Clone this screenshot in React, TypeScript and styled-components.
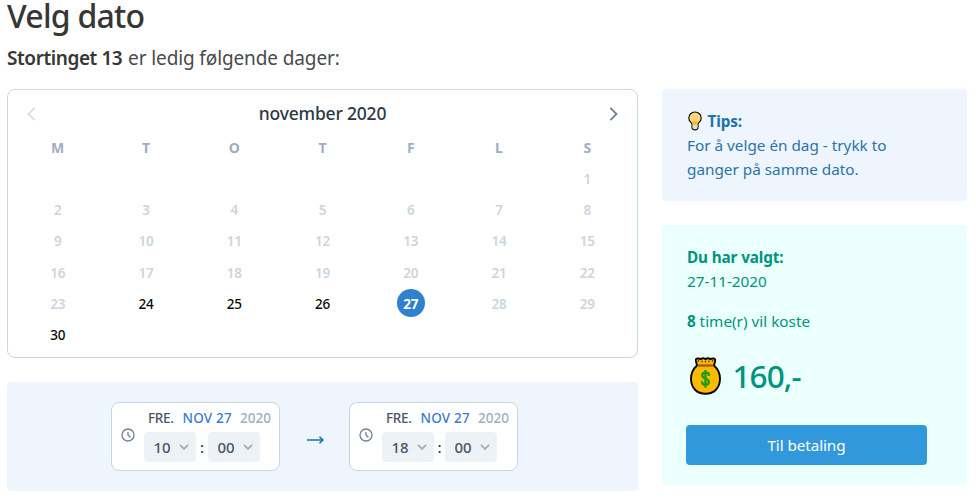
import React from 'react';
import styled, { createGlobalStyle } from 'styled-components';

const GlobalStyle = createGlobalStyle`
  *, *::before, *::after { box-sizing: border-box; }
  body {
    margin: 0;
    background: #fff;
    color: #363636;
    font-family: 'Segoe UI', 'Noto Sans', sans-serif;
  }
  h1, p { margin: 0; }
  button { font-family: inherit; border: 0; background: none; padding: 0; }
  svg { display: block; flex: none; }
`;

const Page = styled.main`
  width: 976px;
  height: 502px;
  padding: 0 9px 0 7px;
`;

const Title = styled.h1`
  height: 33px;
  line-height: 32px;
  font-size: 32px;
  font-weight: 500;
  letter-spacing: -0.75px;
`;

const Subtitle = styled.p`
  margin-top: 12px;
  height: 26px;
  line-height: 26px;
  font-size: 19px;
  font-weight: 400;
  letter-spacing: -0.12px;
  color: #4a4a4a;
  white-space: nowrap;
`;

const RoomName = styled.strong`
  color: #363636;
  font-weight: 600;
  letter-spacing: -0.42px;
  margin-right: 1px;
`;

const Columns = styled.div`
  display: grid;
  grid-template-columns: 631px 305px;
  column-gap: 24px;
  align-items: start;
  margin-top: 18px;
`;

const Stack = styled.div`
  display: flex;
  flex-direction: column;
  gap: 24px;
`;

const Calendar = styled.section`
  height: 269px;
  border: 1px solid #cbd5e0;
  border-radius: 8px;
  padding: 10px 5.6px 0;
`;

const CalendarHeader = styled.header`
  display: flex;
  align-items: center;
  justify-content: space-between;
  height: 28px;
  padding: 0 7.4px;
`;

const MonthTitle = styled.div`
  margin-top: -2px;
  font-size: 17.5px;
  font-weight: 500;
  letter-spacing: -0.2px;
  color: #2d3748;
`;

const NavButton = styled.button<{ $disabled?: boolean }>`
  display: flex;
  color: #718096;
  opacity: ${p => (p.$disabled ? 0.25 : 1)};
`;

const Weeks = styled.div`
  display: grid;
  grid-template-columns: repeat(7, 1fr);
  grid-template-rows: 33px;
  grid-auto-rows: 31.2px;
  padding-top: 4px;
`;

const Weekday = styled.div`
  text-align: center;
  font-size: 14px;
  font-weight: 700;
  line-height: 32px;
  color: #a0aec0;
`;

const DayCell = styled.div`
  display: flex;
  justify-content: center;
  align-items: flex-start;
`;

const Day = styled.span<{ $state: 'off' | 'on' | 'selected' }>`
  width: 28px;
  height: 28px;
  margin-top: ${p => (p.$state === 'selected' ? '-0.8px' : '0')};
  border-radius: 50%;
  text-align: center;
  font-size: 13.5px;
  line-height: ${p => (p.$state === 'selected' ? '30.6px' : '29px')};
  letter-spacing: -0.2px;
  font-weight: ${p => (p.$state === 'selected' ? 700 : p.$state === 'off' ? 600 : 500)};
  color: ${p => (p.$state === 'selected' ? '#fff' : p.$state === 'off' ? '#cbd5e0' : '#0a0a0a')};
  background: ${p => (p.$state === 'selected' ? '#3182ce' : 'transparent')};
`;

const TimePanel = styled.section`
  display: flex;
  align-items: flex-start;
  height: 109px;
  padding: 20px 0 0 104px;
  border-radius: 4px;
  background: #eef5fc;
`;

const TimeCard = styled.div`
  display: flex;
  width: 169px;
  height: 69px;
  padding-left: 8px;
  border: 1px solid #cbd5e0;
  border-radius: 8px;
  background: #fff;
`;

const ClockSlot = styled.div`
  width: 24px;
  padding-top: 24px;
  color: #718096;
`;

const DateLine = styled.div`
  display: flex;
  height: 29px;
  padding-left: 4px;
  line-height: 31px;
  font-size: 13.5px;
  font-weight: 500;
  white-space: nowrap;
`;

const WeekdayName = styled.span`
  width: 34.5px;
  letter-spacing: -0.3px;
  color: #4a5568;
`;

const MonthDay = styled.span`
  width: 57.5px;
  letter-spacing: 0.2px;
  color: #3a7bd0;
`;

const Year = styled.span`
  color: #a0aec0;
`;

const TimeLine = styled.div`
  display: flex;
  align-items: center;
`;

const TimeSelect = styled.div`
  display: flex;
  align-items: center;
  justify-content: space-between;
  width: 52px;
  height: 30px;
  padding: 0 7px 0 9.5px;
  border-radius: 4px;
  background: #edf2f7;
  color: #4a5568;
  font-size: 15px;
  font-weight: 500;
  letter-spacing: -0.2px;

  svg { color: #a0aec0; }
`;

const Colon = styled.span<{ $width: number }>`
  width: ${p => p.$width}px;
  text-align: center;
  font-size: 15px;
  font-weight: 500;
  color: #333;
`;

const ArrowSlot = styled.div`
  display: flex;
  justify-content: center;
  width: 69px;
  padding: 33px 0 0 1px;
  color: #1d72aa;
`;

const Message = styled.section<{ $tone: 'info' | 'success' }>`
  height: ${p => (p.$tone === 'info' ? 112 : 260)}px;
  padding: 20px 24px;
  border-radius: 4px;
  font-size: 15.3px;
  line-height: 24px;
  color: ${p => (p.$tone === 'info' ? '#2b73ac' : '#00947e')};
  background: ${p => (p.$tone === 'info' ? '#eef5fc' : '#ebfffc')};

  strong { font-weight: 700; letter-spacing: -0.12px; }
`;

const TipsHeading = styled.div`
  display: flex;
  height: 24px;
  margin-left: 2px;
  gap: 5.5px;
  color: #1d72aa;

  svg { margin-top: 2px; }
`;

const Line = styled.p`
  font-weight: 400;
  padding-left: 1px;
  white-space: nowrap;
`;

const HoursLine = styled(Line)`
  margin-top: 16px;
`;

const Price = styled.div`
  display: flex;
  align-items: center;
  gap: 11.5px;
  height: 40px;
  margin: 23px 0 0 4px;
  font-size: 31.5px;
  font-weight: 500;
  letter-spacing: -0.9px;
`;

const PayButton = styled.button`
  display: block;
  width: 241px;
  height: 40px;
  margin-top: 29px;
  border-radius: 4px;
  background: #3298dc;
  color: #fff;
  font-size: 15.3px;
  letter-spacing: -0.1px;
`;

const Chevron = ({ dir }: { dir: 'left' | 'right' }) => (
  <svg width="20" height="20" viewBox="0 0 20 20" fill="none" stroke="currentColor" strokeWidth="1.8">
    <path d={dir === 'left' ? 'M13.7 3.9L7.4 10l6.3 6.2' : 'M6.3 3.9l6.3 6.1l-6.3 6.2'} />
  </svg>
);

const ClockIcon = () => (
  <svg width="16" height="16" viewBox="0 0 24 24" fill="none" stroke="currentColor" strokeWidth="2" strokeLinecap="round" strokeLinejoin="round">
    <path d="M12 8v4l3 3m6-3a9 9 0 11-18 0 9 9 0 0118 0z" />
  </svg>
);

const CaretIcon = () => (
  <svg width="10" height="8" viewBox="0 0 10 8" fill="none" stroke="currentColor" strokeWidth="1.8">
    <path d="M.9 1.9L5 5.9l4.1-4" />
  </svg>
);

const ArrowIcon = () => (
  <svg width="17" height="10" viewBox="0 0 17 10" fill="none" stroke="currentColor" strokeWidth="1.6">
    <path d="M0 5h16M12.5 1.7L15.9 5l-3.4 3.3" />
  </svg>
);

const BulbIcon = () => (
  <svg width="14" height="20" viewBox="0 0 14 20">
    <path
      d="M7 1C3.500 1 .8 3.700.8 7c0 2.100 1 3.800 2.400 4.900.6.500.8 1 .8 1.700v3c0 1.400 1.100 2.200 3 2.200s3-.8 3-2.200v-3c0-.7.200-1.200.8-1.700C12.200 10.800 13.200 9.100 13.200 7c0-3.300-2.700-6-6.200-6z"
      fill="#ffd679" stroke="#111" strokeWidth="1.200"
    />
    <path d="M4 10.400h6l-.6 3.400H4.600z" fill="#ffb900" />
    <path d="M4.600 13.800h4.800v2.700c0 1.100-.9 1.700-2.400 1.700s-2.400-.6-2.400-1.700z" fill="#d9dcdf" />
  </svg>
);

const MoneyBagIcon = () => (
  <svg width="31" height="38" viewBox="0 0 31 38">
    <path
      d="M7 8.500L5.900 3.700c-.3-1.800.8-2.500 2.500-2.200l2.400.5 2.300-.8 2.500.8 2.400-.8 2.400.8 2.300-.5c1.800-.3 2.900.6 2.500 2.300L24 8.500c3.500 3.100 6 7.200 6 13.300C30 31 24 36.800 15.500 36.800S1 31 1 21.800C1 15.700 3.500 11.600 7 8.500z"
      fill="#ffb900" stroke="#050505" strokeWidth="1.900" strokeLinejoin="round"
    />
    <path d="M8.300 7.300h14.400l1.100 2.400H7.200z" fill="#a4612f" />
    <path d="M8.500 3.300v1.200M12 3.700v1.500M15.500 3.700v1.500M19 3.700v1.500M22.500 3.300v1.200" stroke="#201400" strokeWidth="1.200" />
    <path d="M15.500 13v17.800M18.900 19v-1.200c0-1.300-1.200-2.100-3.400-2.100s-3.300 1-3.300 2.500c0 3.800 6.700 2.900 6.700 6.900 0 1.800-1.300 2.700-3.400 2.700s-3.400-.8-3.400-2.500v-1" fill="none" stroke="#16a010" strokeWidth="2.300" />
  </svg>
);

const weekdays = ['M', 'T', 'O', 'T', 'F', 'L', 'S'];
const days = Array.from({ length: 30 }, (_, i) => i + 1);
const available = [24, 25, 26, 30];
const selectedDay = 27;

const dayState = (day: number) =>
  day === selectedDay ? 'selected' : available.includes(day) ? 'on' : 'off';

const TimePicker = ({ hour, colonWidth }: { hour: string; colonWidth: number }) => (
  <TimeCard>
    <ClockSlot><ClockIcon /></ClockSlot>
    <div>
      <DateLine>
        <WeekdayName>FRE.</WeekdayName>
        <MonthDay>NOV 27</MonthDay>
        <Year>2020</Year>
      </DateLine>
      <TimeLine>
        <TimeSelect>{hour}<CaretIcon /></TimeSelect>
        <Colon $width={colonWidth}>:</Colon>
        <TimeSelect>00<CaretIcon /></TimeSelect>
      </TimeLine>
    </div>
  </TimeCard>
);

export default function App() {
  return (
    <>
      <GlobalStyle />
      <Page>
        <Title>Velg dato</Title>
        <Subtitle><RoomName>Stortinget 13</RoomName> er ledig følgende dager:</Subtitle>
        <Columns>
          <Stack>
            <Calendar>
              <CalendarHeader>
                <NavButton $disabled aria-label="Forrige måned"><Chevron dir="left" /></NavButton>
                <MonthTitle>november 2020</MonthTitle>
                <NavButton aria-label="Neste måned"><Chevron dir="right" /></NavButton>
              </CalendarHeader>
              <Weeks>
                {weekdays.map((name, i) => <Weekday key={i}>{name}</Weekday>)}
                {weekdays.slice(1).map((_, i) => <DayCell key={`blank-${i}`} />)}
                {days.map(day => (
                  <DayCell key={day}><Day $state={dayState(day)}>{day}</Day></DayCell>
                ))}
              </Weeks>
            </Calendar>
            <TimePanel>
              <TimePicker hour="10" colonWidth={12} />
              <ArrowSlot><ArrowIcon /></ArrowSlot>
              <TimePicker hour="18" colonWidth={11} />
            </TimePanel>
          </Stack>
          <Stack>
            <Message $tone="info">
              <TipsHeading><BulbIcon /><strong>Tips:</strong></TipsHeading>
              <Line>For å velge én dag - trykk to</Line>
              <Line>ganger på samme dato.</Line>
            </Message>
            <Message $tone="success">
              <Line><strong>Du har valgt:</strong></Line>
              <Line>27-11-2020</Line>
              <HoursLine><strong>8</strong> time(r) vil koste</HoursLine>
              <Price><MoneyBagIcon />160,-</Price>
              <PayButton>Til betaling</PayButton>
            </Message>
          </Stack>
        </Columns>
      </Page>
    </>
  );
}
